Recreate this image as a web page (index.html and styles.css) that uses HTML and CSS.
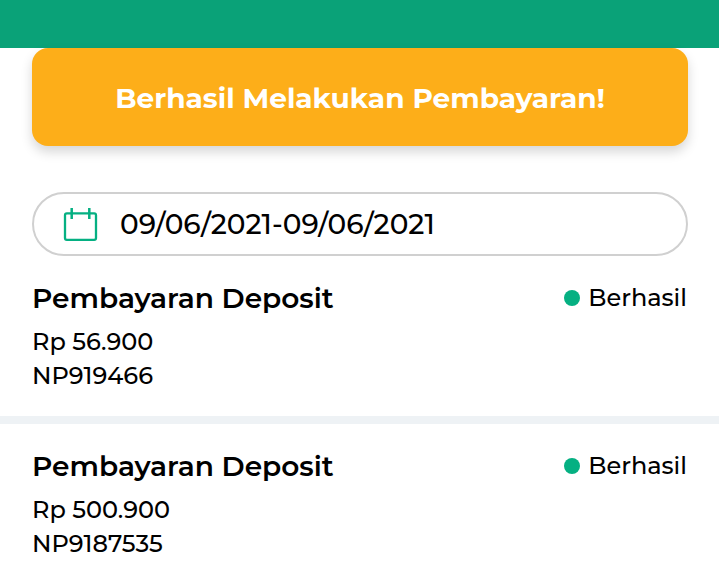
FILE: index.html
```html
<!DOCTYPE html>
<html lang="id">
<head>
<meta charset="utf-8">
<title>Pembayaran</title>
<link rel="stylesheet" href="styles.css">
</head>
<body>
<header class="topbar"></header>
<main>
  <div class="banner"><span class="banner-text">Berhasil Melakukan Pembayaran!</span></div>
  <div class="date-field">
    <svg class="calendar" width="36" height="36" viewBox="0 0 36 36" fill="none" stroke="#05b082">
      <rect x="3" y="7.4" width="31" height="26.4" rx="1.8" stroke-width="2.3"/>
      <path d="M9.7 2v11M27.3 2v11" stroke-width="2.5"/>
    </svg>
    <span class="date-text">09/06/2021-09/06/2021</span>
  </div>
  <article class="payment">
    <div class="payment-head">
      <h2 class="title">Pembayaran Deposit</h2>
      <div class="status"><i class="dot"></i><span class="status-text">Berhasil</span></div>
    </div>
    <p class="detail">Rp 56.900</p>
    <p class="detail">NP919466</p>
  </article>
  <article class="payment">
    <div class="payment-head">
      <h2 class="title">Pembayaran Deposit</h2>
      <div class="status"><i class="dot"></i><span class="status-text">Berhasil</span></div>
    </div>
    <p class="detail">Rp 500.900</p>
    <p class="detail">NP9187535</p>
  </article>
</main>
</body>
</html>
```
FILE: styles.css
```css
* { box-sizing: border-box; }
body {
  margin: 0;
  height: 578px;
  overflow: hidden;
  background: #fff;
  color: #000;
  font-family: Montserrat, Inter, "Open Sans", sans-serif;
  white-space: nowrap;
}
.topbar { height: 48px; background: #0aa278; }
.banner {
  display: flex;
  align-items: center;
  justify-content: center;
  height: 98px;
  margin: 0 31px 46px 32px;
  padding-top: 1px;
  border-radius: 16px;
  background: #fdae19;
  box-shadow: 0 6px 12px rgba(0, 0, 0, .16);
  color: #fff;
}
.banner-text { font-size: 28px; font-weight: 700; }
.date-field {
  display: flex;
  align-items: center;
  height: 64px;
  margin: 0 31px 0 32px;
  padding-left: 28px;
  border: 2px solid #d0d0d0;
  border-radius: 32px;
}
.calendar { display: block; margin-right: 22px; }
.date-text { font-size: 28px; line-height: 36px; font-weight: 500; }
.payment { height: 160px; padding: 22px 32px 0; }
.payment + .payment { height: 168px; border-top: 8px solid #eef2f5; }
.payment-head {
  display: flex;
  align-items: center;
  justify-content: space-between;
  height: 40px;
  margin-bottom: 7px;
}
.title { margin: 0; font-size: 28px; line-height: 40px; font-weight: 600; }
.status { display: flex; align-items: center; gap: 8px; }
.dot { width: 16px; height: 16px; border-radius: 50%; background: #05b082; }
.status-text { font-size: 24px; line-height: 34px; font-weight: 500; }
.detail { margin: 0; font-size: 24px; line-height: 34px; font-weight: 500; }
```
